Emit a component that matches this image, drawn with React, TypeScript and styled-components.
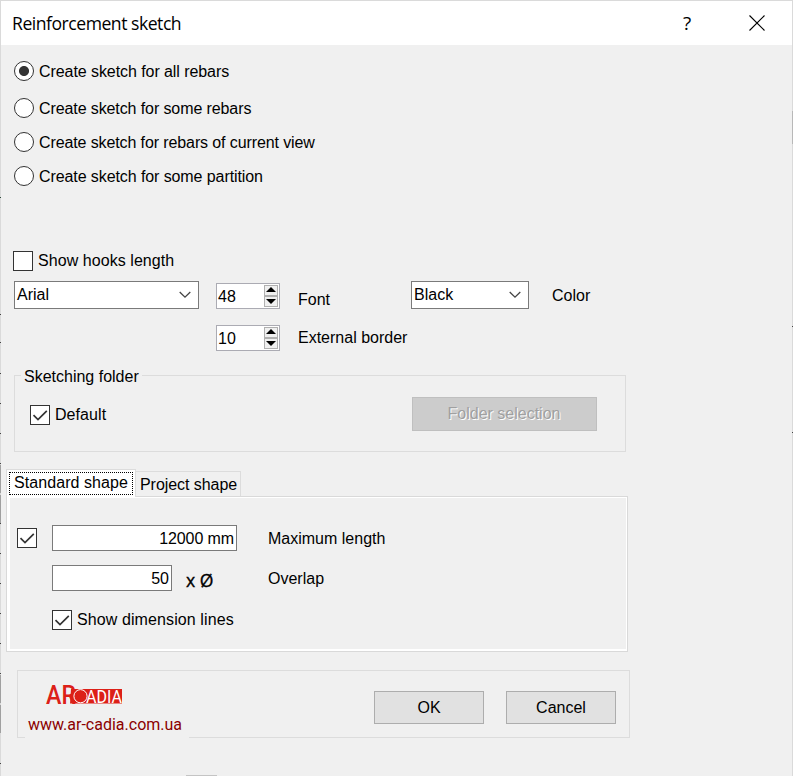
import React from "react";
import styled, { createGlobalStyle, css } from "styled-components";

const GlobalStyle = createGlobalStyle`
  *, *::before, *::after { box-sizing: border-box; }
  body { margin: 0; background: #f0f0f0; }
`;

const Window = styled.main`
  width: 793px;
  height: 776px;
  overflow: hidden;
  display: flex;
  flex-direction: column;
  border: solid #dadada;
  border-width: 1px 1px 0;
  background: #f0f0f0;
  color: #000;
  font: 16px/20px "Liberation Sans", Arial, sans-serif;
  white-space: nowrap;
`;

const EdgeMark = styled.i<{ $x: number; $y: number; $w?: number; $h?: number; $c?: string }>`
  position: absolute;
  left: ${(p) => p.$x}px;
  top: ${(p) => p.$y}px;
  width: ${(p) => p.$w ?? 1}px;
  height: ${(p) => p.$h ?? 1}px;
  background: ${(p) => p.$c ?? "#444"};
`;

const TitleBar = styled.header`
  flex: none;
  height: 44px;
  display: flex;
  align-items: center;
  padding: 0 27px 0 11px;
  background: #fff;
`;

const Title = styled.h1`
  flex: 1;
  margin: 0;
  font: 400 17.6px/24px "Open Sans", "Noto Sans", sans-serif;
  letter-spacing: -0.48px;
`;

const HelpButton = styled.button`
  all: unset;
  width: 12px;
  margin-right: 56px;
  padding-left: 1px;
  text-align: center;
  font: 400 19px/24px "Open Sans", "Noto Sans", sans-serif;
`;

const CloseButton = styled.button`
  all: unset;
  width: 16px;
  height: 16px;
  margin-bottom: 1px;
  svg { display: block; }
`;

const RadioList = styled.div`
  display: flex;
  flex-direction: column;
  gap: 14px;
  padding: 16px 0 0 13px;
`;

const Option = styled.label<{ $after?: number }>`
  display: flex;
  align-items: center;
  height: 20px;
  gap: 5px;
  margin-bottom: ${(p) => p.$after ?? 0}px;
`;

const RadioMark = styled.span<{ $on?: boolean }>`
  flex: none;
  width: 20px;
  height: 20px;
  border: 1px solid #333;
  border-radius: 50%;
  background: ${(p) => (p.$on ? "radial-gradient(circle, #333 4.6px, #fff 5.4px)" : "#fff")};
`;

const CheckBox = styled.span`
  flex: none;
  width: 20px;
  height: 20px;
  border: 1px solid #333;
  background: #fff;
  svg { display: block; }
`;

const Caption = styled.span<{ $drop?: number; $ls?: number }>`
  padding-top: ${(p) => p.$drop ?? 0}px;
  letter-spacing: ${(p) => p.$ls ?? 0}px;
`;

const HooksRow = styled.div`
  padding: 65px 0 0 12px;
`;

const FontGrid = styled.div`
  display: grid;
  grid-template-columns: 185px 64px 113px 118px auto;
  grid-template-rows: 28px 26px;
  row-gap: 16px;
  padding: 10px 0 0 13px;
`;

const Select = styled.div`
  height: 28px;
  display: flex;
  align-items: center;
  justify-content: space-between;
  border: 1px solid #7a7a7a;
  background: #fff;
  padding: 0 7px 0 2px;
`;

const Spinner = styled.div<{ $row: number }>`
  grid-column: 2;
  grid-row: ${(p) => p.$row};
  align-self: end;
  height: 26px;
  width: 64px;
  margin-left: 17px;
  display: flex;
  align-items: center;
  justify-content: space-between;
  border: 1px solid #ababb3;
  background: #fff;
  padding: 0 1px;
`;

const Steps = styled.span`
  width: 14px;
  height: 22px;
  display: grid;
  grid-template-rows: 11px 11px;
`;

const Step = styled.span`
  border: 1px solid #b0b0b0;
  background: #f0f0f0;
  svg { display: block; }
`;

const FieldLabel = styled.span<{ $row: number; $top: number; $left: number; $col: number }>`
  grid-row: ${(p) => p.$row};
  grid-column: ${(p) => p.$col};
  padding: ${(p) => `${p.$top}px 0 0 ${p.$left}px`};
`;

const ColorSelect = styled(Select)`
  grid-column: 4;
  margin-left: 35px;
  width: 118px;
`;

const FolderGroup = styled.fieldset`
  flex: none;
  width: 612px;
  height: 87px;
  margin: 14px 0 0 13px;
  padding: 0;
  border: 1px solid #dcdcdc;
  min-width: 0;
`;

const Legend = styled.legend`
  height: 20px;
  margin-left: 6px;
  padding: 0 3px;
  line-height: 24px;
`;

const FolderContent = styled.div`
  display: flex;
  justify-content: space-between;
  align-items: center;
  padding: 12px 28px 0 15px;
`;

const FolderOption = styled(Option)`
  margin-top: 2px;
`;

const PushButton = styled.button<{ $w: number; $off?: boolean }>`
  width: ${(p) => p.$w}px;
  height: 33px;
  padding: 0;
  border: 1px solid #adadad;
  background: #e1e1e1;
  color: #000;
  font: inherit;
  ${(p) =>
    p.$off &&
    css`
      height: 34px;
      padding-right: 1px;
      border-color: #bfbfbf;
      background: #ccc;
      color: #a0a0a0;
      text-shadow: 1px 1px 0 #fff;
    `}
`;

const Tabs = styled.div`
  flex: none;
  display: flex;
  align-items: flex-end;
  height: 27px;
  margin: 17px 0 0 5px;
`;

const ActiveTab = styled.div`
  z-index: 1;
  width: 130px;
  height: 28px;
  margin-bottom: -1px;
  padding: 2px 2px 1px;
  border: 1px solid #dcdcdc;
  border-bottom: 0;
  background: #fff;
`;

const FocusRing = styled.div`
  height: 23px;
  padding-left: 4px;
  border: 1px dotted #000;
  background: #fff;
  letter-spacing: 0.07px;
`;

const Tab = styled.div`
  width: 105px;
  height: 25px;
  padding: 3px 0 0 4px;
  border: 1px solid #dcdcdc;
  border-width: 1px 1px 0 0;
  letter-spacing: -0.06px;
`;

const TabPanel = styled.section`
  flex: none;
  width: 622px;
  height: 156px;
  margin-left: 5px;
  border: 1px solid #d9d9d9;
  background: #fff;
  padding: 1px 1px 2px 3px;
`;

const PanelBody = styled.div`
  height: 100%;
  background: #f0f0f0;
  display: grid;
  grid-template-columns: 35px 216px auto;
  grid-template-rows: 26px 26px 20px;
  row-gap: 14px;
  padding: 27px 0 0 7px;
  align-items: center;
`;

const FieldCell = styled.div`
  grid-column: 2;
  display: flex;
  align-items: center;
`;

const NumberField = styled.div<{ $w: number; $ls?: number }>`
  width: ${(p) => p.$w}px;
  height: 26px;
  padding: 3px 2px 0 0;
  border: 1px solid #7a7a7a;
  background: #fff;
  text-align: right;
  letter-spacing: ${(p) => p.$ls ?? 0}px;
`;

const Times = styled.span`
  padding: 4px 0 0 14px;
  font: 17.6px/20px "Open Sans", "Noto Sans", sans-serif;
  -webkit-text-stroke: 0.35px #000;
`;

const DimensionOption = styled(Option)`
  grid-column: 2;
  margin-top: 10px;
`;

const Footer = styled.footer`
  flex: none;
  width: 613px;
  height: 68px;
  margin: 18px 0 0 16px;
  display: flex;
  border: 1px solid #dcdcdc;
`;

const Brand = styled.div`
  width: 164px;
  height: 62px;
  margin: 5px 185px -1px 7px;
  background: #f0f0f0;
  padding-left: 3px;
  svg { display: block; margin-left: 16px; }
`;

const SiteLink = styled.a`
  display: block;
  margin-top: 5px;
  color: #8b0000;
  font: 16px/20px Roboto, sans-serif;
`;

const Actions = styled.div`
  display: flex;
  gap: 22px;
  padding-top: 20px;
`;

const Check = () => (
  <svg width="18" height="18" viewBox="0 0 18 18">
    <path d="M2.5 9.2 7 13.6 15.8 4.8" fill="none" stroke="#333" strokeWidth="1.7" />
  </svg>
);

const Chevron = () => (
  <svg width="12" height="8" viewBox="0 0 12 8">
    <path d="M.7 1 6 6.2 11.3 1" fill="none" stroke="#444" strokeWidth="1.3" />
  </svg>
);

const SpinButtons = () => (
  <Steps>
    <Step>
      <svg width="12" height="9" viewBox="0 0 12 9"><path d="M1 6 6 1l5 5z" /></svg>
    </Step>
    <Step>
      <svg width="12" height="9" viewBox="0 0 12 9"><path d="M1 2h10L6 7z" /></svg>
    </Step>
  </Steps>
);

const Logo = () => (
  <svg width="82" height="34" viewBox="0 -7 82 34">
    <path d="M27 6h51v14.5H26z" fill="#dc2018" />
    <text x="2" y="20.5" fontSize="25" fontWeight="500" fontFamily="Roboto, sans-serif" fill="#dc2018" textLength="30" lengthAdjust="spacingAndGlyphs">AR</text>
    <circle cx="36.5" cy="13.2" r="6.6" fill="#dc2018" stroke="#fff" strokeWidth="1" />
    <text x="42" y="20.2" fontSize="19" fontFamily="Roboto, sans-serif" fill="#fff" textLength="36" lengthAdjust="spacingAndGlyphs">ADIA</text>
  </svg>
);

const SOURCES = [
  { text: "Create sketch for all rebars", on: true, after: 3, ls: -0.07 },
  { text: "Create sketch for some rebars", ls: -0.1 },
  { text: "Create sketch for rebars of current view", ls: -0.11 },
  { text: "Create sketch for some partition", ls: -0.09 },
];

const LEFT_TICKS = [314, 342, 373, 403, 433, 463, 523, 553, 583, 613, 643, 673, 763];
const LEFT_BARS = [465, 495, 675, 705];

export default function App() {
  return (
    <>
      <GlobalStyle />
      <Window>
        <TitleBar>
          <Title>Reinforcement sketch</Title>
          <HelpButton>?</HelpButton>
          <CloseButton aria-label="Close">
            <svg width="16" height="16" viewBox="0 0 16 16">
              <path d="M.5.5l15 15M15.5.5l-15 15" stroke="#000" strokeWidth="1.1" />
            </svg>
          </CloseButton>
        </TitleBar>
        <RadioList>
          {SOURCES.map((s) => (
            <Option key={s.text} $after={s.after}>
              <RadioMark $on={s.on} />
              <Caption $drop={2} $ls={s.ls}>{s.text}</Caption>
            </Option>
          ))}
        </RadioList>
        <HooksRow>
          <Option>
            <CheckBox />
            <Caption $ls={0.06}>Show hooks length</Caption>
          </Option>
        </HooksRow>
        <FontGrid>
          <Select>Arial<Chevron /></Select>
          <Spinner $row={1}><Caption $drop={1} $ls={0.1}>48</Caption><SpinButtons /></Spinner>
          <FieldLabel $row={1} $col={3} $top={9} $left={35}>Font</FieldLabel>
          <ColorSelect>Black<Chevron /></ColorSelect>
          <FieldLabel $row={1} $col={5} $top={5} $left={58}>Color</FieldLabel>
          <Spinner $row={2}><Caption $drop={1} $ls={0.1}>10</Caption><SpinButtons /></Spinner>
          <FieldLabel $row={2} $col={3} $top={3} $left={35}>External border</FieldLabel>
        </FontGrid>
        <FolderGroup>
          <Legend>Sketching folder</Legend>
          <FolderContent>
            <FolderOption>
              <CheckBox><Check /></CheckBox>
              <Caption $ls={0.07}>Default</Caption>
            </FolderOption>
            <PushButton $w={185} $off disabled>Folder selection</PushButton>
          </FolderContent>
        </FolderGroup>
        <Tabs>
          <ActiveTab><FocusRing>Standard shape</FocusRing></ActiveTab>
          <Tab>Project shape</Tab>
        </Tabs>
        <TabPanel>
          <PanelBody>
            <CheckBox><Check /></CheckBox>
            <FieldCell><NumberField $w={185} $ls={-0.1}>12000 mm</NumberField></FieldCell>
            <Caption $drop={2}>Maximum length</Caption>
            <FieldCell>
              <NumberField $w={120}>50</NumberField>
              <Times>x Ø</Times>
            </FieldCell>
            <Caption $drop={2}>Overlap</Caption>
            <DimensionOption>
              <CheckBox><Check /></CheckBox>
              <Caption $ls={0.1}>Show dimension lines</Caption>
            </DimensionOption>
          </PanelBody>
        </TabPanel>
        <Footer>
          <Brand>
            <Logo />
            <SiteLink>www.ar-cadia.com.ua</SiteLink>
          </Brand>
          <Actions>
            <PushButton $w={110}>OK</PushButton>
            <PushButton $w={110}>Cancel</PushButton>
          </Actions>
        </Footer>
      </Window>
      {LEFT_TICKS.map((y) => <EdgeMark key={y} $x={0} $y={y} />)}
      {LEFT_BARS.map((y) => <EdgeMark key={y} $x={0} $y={y} $h={28} $c="#a0a0a0" />)}
      <EdgeMark $x={0} $y={197} $c="#2c4a3a" />
      <EdgeMark $x={792} $y={111} $h={33} $c="#b8b8b8" />
      <EdgeMark $x={792} $y={326} />
      <EdgeMark $x={792} $y={432} />
      <EdgeMark $x={186} $y={775} $w={31} $c="#c4c4c4" />
    </>
  );
}
